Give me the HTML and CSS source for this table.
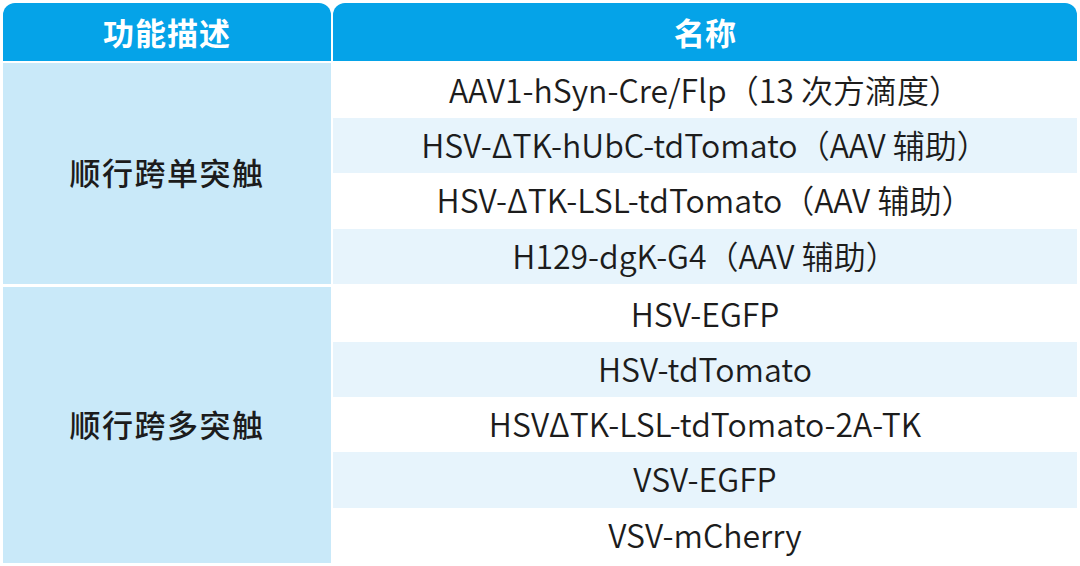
FILE: index.html
```html
<!DOCTYPE html>
<html lang="zh-CN">
<head>
<meta charset="utf-8">
<title>表格</title>
<link rel="stylesheet" href="styles.css">
</head>
<body>
<div class="table">
  <div class="head">
    <div class="hcell hleft">功能描述</div>
    <div class="hcell hright">名称</div>
  </div>
  <div class="group">
    <div class="gname">顺行跨单突触</div>
    <div class="rows">
      <div class="row">AAV1-hSyn-Cre/Flp（13 次方滴度）</div>
      <div class="row alt">HSV-ΔTK-hUbC-tdTomato（AAV 辅助）</div>
      <div class="row">HSV-ΔTK-LSL-tdTomato（AAV 辅助）</div>
      <div class="row alt">H129-dgK-G4（AAV 辅助）</div>
    </div>
  </div>
  <div class="group">
    <div class="gname">顺行跨多突触</div>
    <div class="rows">
      <div class="row">HSV-EGFP</div>
      <div class="row alt">HSV-tdTomato</div>
      <div class="row">HSVΔTK-LSL-tdTomato-2A-TK</div>
      <div class="row alt">VSV-EGFP</div>
      <div class="row">VSV-mCherry</div>
    </div>
  </div>
</div>
</body>
</html>
```

FILE: styles.css
```css
html, body {
  margin: 0;
  padding: 0;
  background: #ffffff;
}
body {
  font-family: "Noto Sans CJK SC", "Noto Sans", sans-serif;
  color: #1c1c1c;
}
.table {
  padding: 3px 3px 0 3px;
  display: flex;
  flex-direction: column;
  gap: 2px;
}
.head {
  display: flex;
  gap: 2px;
  height: 58px;
}
.hcell {
  background: #05a3e8;
  color: #ffffff;
  font-weight: 700;
  font-size: 31px;
  display: flex;
  align-items: center;
  justify-content: center;
  border-radius: 12px 12px 0 0;
  padding-bottom: 2px;
  box-sizing: border-box;
}
.hleft {
  width: 328px;
  letter-spacing: 1px;
}
.hright {
  flex: 1;
}
.group {
  display: flex;
  gap: 2px;
}
.group + .group {
  margin-top: 1px;
}
.gname {
  width: 328px;
  background: #c9e9f9;
  display: flex;
  align-items: center;
  justify-content: center;
  font-size: 31px;
  font-weight: 500;
  letter-spacing: 1.5px;
  padding-bottom: 3px;
  box-sizing: border-box;
}
.rows {
  flex: 1;
  display: flex;
  flex-direction: column;
}
.row {
  height: 55.2px;
  display: flex;
  align-items: center;
  justify-content: center;
  font-size: 32px;
  font-weight: 350;
  background: #ffffff;
  padding-bottom: 3px;
  box-sizing: border-box;
}
.row.alt {
  background: #e7f4fc;
}
```
